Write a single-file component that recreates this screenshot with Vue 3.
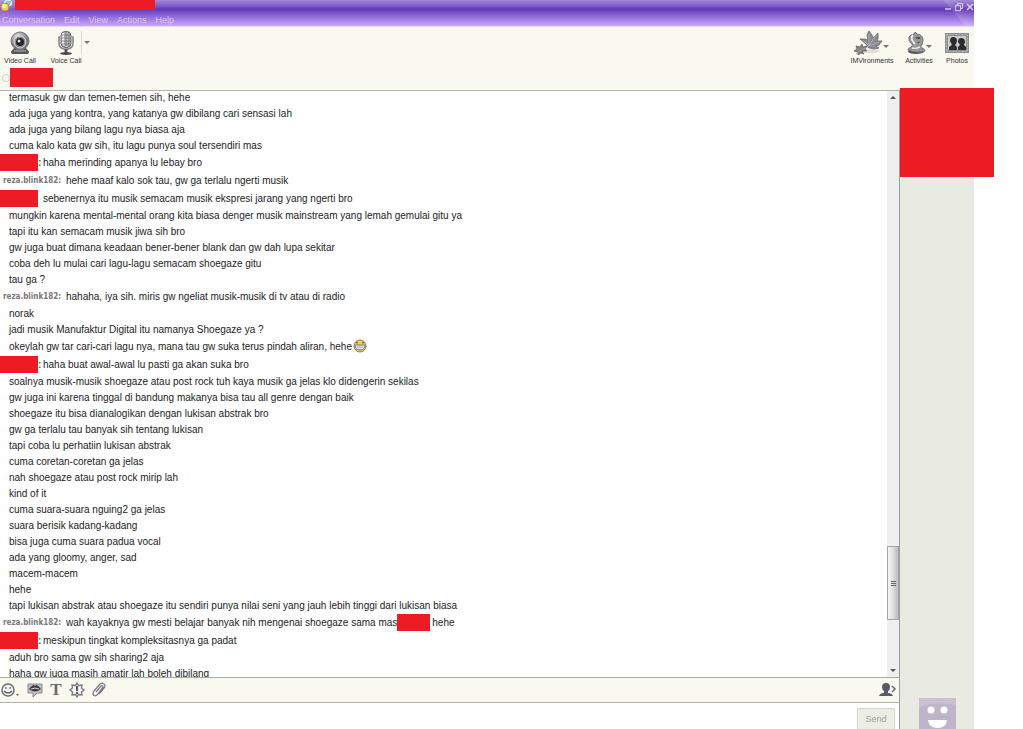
<script setup>
import { ref } from 'vue'

const draft = ref('')

const menus = ['Conversation', 'Edit', 'View', 'Actions', 'Help']

const messages = [
  {
    lines: [
      'termasuk gw dan temen-temen sih, hehe',
      'ada juga yang kontra, yang katanya gw dibilang cari sensasi lah',
      'ada juga yang bilang lagu nya biasa aja',
      'cuma kalo kata gw sih, itu lagu punya soul tersendiri mas'
    ]
  },
  { colon: true, text: 'haha merinding apanya lu lebay bro' },
  { name: 'reza.blink182:', text: 'hehe maaf kalo sok tau, gw ga terlalu ngerti musik' },
  {
    text: 'sebenernya itu musik semacam musik ekspresi jarang yang ngerti bro',
    lines: [
      'mungkin karena mental-mental orang kita biasa denger musik mainstream yang lemah gemulai gitu ya',
      'tapi itu kan semacam musik jiwa sih bro',
      'gw juga buat dimana keadaan bener-bener blank dan gw dah lupa sekitar',
      'coba deh lu mulai cari lagu-lagu semacam shoegaze gitu',
      'tau ga ?'
    ]
  },
  {
    name: 'reza.blink182:',
    text: 'hahaha, iya sih. miris gw ngeliat musik-musik di tv atau di radio',
    lines: [
      'norak',
      'jadi musik Manufaktur Digital itu namanya Shoegaze ya ?',
      'okeylah gw tar cari-cari lagu nya, mana tau gw suka terus pindah aliran, hehe'
    ],
    grin: true
  },
  {
    colon: true,
    text: 'haha buat awal-awal lu pasti ga akan suka bro',
    lines: [
      'soalnya musik-musik shoegaze atau post rock tuh kaya musik ga jelas klo didengerin sekilas',
      'gw juga ini karena tinggal di bandung makanya bisa tau all genre dengan baik',
      'shoegaze itu bisa dianalogikan dengan lukisan abstrak bro',
      'gw ga terlalu tau banyak sih tentang lukisan',
      'tapi coba lu perhatiin lukisan abstrak',
      'cuma coretan-coretan ga jelas',
      'nah shoegaze atau post rock mirip lah',
      'kind of it',
      'cuma suara-suara nguing2 ga jelas',
      'suara berisik kadang-kadang',
      'bisa juga cuma suara padua vocal',
      'ada yang gloomy, anger, sad',
      'macem-macem',
      'hehe',
      'tapi lukisan abstrak atau shoegaze itu sendiri punya nilai seni yang jauh lebih tinggi dari lukisan biasa'
    ]
  },
  {
    name: 'reza.blink182:',
    text: 'wah kayaknya gw mesti belajar banyak nih mengenai shoegaze sama mas',
    after: 'hehe'
  },
  {
    colon: true,
    text: 'meskipun tingkat kompleksitasnya ga padat',
    lines: [
      'aduh bro sama gw sih sharing2 aja',
      'haha gw juga masih amatir lah boleh dibilang'
    ]
  }
]
</script>

<template>
  <div class="window">
    <header class="title-area">
      <div class="title-bar">
        <svg class="app-icon" width="14" height="12" viewBox="0 0 14 12">
          <ellipse cx="8" cy="3" rx="5" ry="4" fill="#d8eef4" stroke="#4f93b4" />
          <path d="M6 2h5M6 4h4" stroke="#4f93b4" />
          <circle cx="5" cy="7" r="4" fill="#f6d24a" stroke="#c08a28" />
          <circle cx="4" cy="6" r="2" fill="#fff6c8" />
        </svg>
        <span class="redacted title-name"></span>
        <div class="window-controls">
          <button aria-label="Minimize"><svg width="8" height="9" viewBox="0 0 8 9"><path d="M1 7h6" stroke="#d9cdf2" stroke-width="1.500" /></svg></button>
          <button aria-label="Restore"><svg width="8" height="9" viewBox="0 0 8 9"><path d="M2.500 3V1.500h5v5H6M.5 3.500h5v5h-5z" fill="none" stroke="#d9cdf2" /></svg></button>
          <button aria-label="Close"><svg width="8" height="9" viewBox="0 0 8 9"><path d="M1 2l6 6M7 2L1 8" stroke="#d9cdf2" stroke-width="1.600" /></svg></button>
        </div>
      </div>
      <nav class="menu">
        <button v-for="item in menus" :key="item">{{ item }}</button>
      </nav>
    </header>

    <div class="toolbar">
      <button class="tool">
        <svg width="24" height="24" viewBox="0 0 24 24">
          <defs>
            <radialGradient id="lens" cx=".4" cy=".3"><stop offset="0" stop-color="#f4f4f4" /><stop offset="1" stop-color="#77777a" /></radialGradient>
          </defs>
          <path d="M6 17L3 21q0 2 3 2h12q3 0 3-2l-3-4z" fill="#55555a" />
          <circle cx="12" cy="10" r="9" fill="url(#lens)" stroke="#77777a" />
          <circle cx="12" cy="11" r="6" fill="#8d8d90" stroke="#d8d8d8" />
          <circle cx="12" cy="11" r="4" fill="#252528" />
          <circle cx="11" cy="10" r="1.500" fill="#ddd" />
          <path d="M6 20h12" stroke="#b8b8ba" />
        </svg>
        <span>Video Call</span>
      </button>
      <button class="tool">
        <svg width="24" height="24" viewBox="0 0 24 24">
          <path d="M6 6H5v6q0 5 5 6h4q5-1 5-6V6h-1" fill="none" stroke="#88888b" stroke-width="1.600" />
          <rect x="7" y="0.500" width="10" height="16" rx="4" fill="#b4b4b7" stroke="#6e6e72" />
          <path d="M9 2v12" stroke="#f4f4f4" stroke-width="2" />
          <path d="M12 1v14M15 1v14M7 4h10M7 7h10M7 10h10M7 13h10" stroke="#77777b" stroke-width=".8" />
          <path d="M12 18v4" stroke="#555" stroke-width="3" />
          <ellipse cx="12" cy="22.500" rx="6" ry="1.500" fill="#49494c" />
        </svg>
        <span>Voice Call</span>
      </button>
      <button class="arrow divided" aria-label="Voice call options"></button>
      <span class="spacer"></span>
      <button class="tool wide">
        <svg width="28" height="24" viewBox="0 0 28 24">
          <ellipse cx="17" cy="20" rx="9" ry="2" fill="#e2e2da" />
          <path d="M15 17l-3-4-6-5 5 0 3 1-1-5 2-4 3 4 1 3 5-5 0 6-1 2 5 0-3 4-3 1 3 2-5 1-4-1z" fill="#8c8c90" stroke="#66666a" stroke-width=".8" />
          <path d="M15 15L9 9M15 15L15 3M15 15l7-11M15 15l10-4" fill="none" stroke="#c4c4c7" stroke-width=".6" />
          <path d="M8 20l2 3-3-1-3 2 0-3-4-1 3-2-1-3 4 1 2-3 1 3 4-1-2 3 2 2z" fill="#85858a" stroke="#626266" stroke-width=".8" />
          <path d="M2 23l5-4 7-3" fill="none" stroke="#a9a9ac" stroke-width=".8" />
        </svg>
        <span>IMVironments</span>
        <i class="arrow over"></i>
      </button>
      <button class="tool activities">
        <svg width="24" height="24" viewBox="0 0 24 24">
          <ellipse cx="13" cy="20.500" rx="8" ry="2.500" fill="#56565a" />
          <path d="M5 19q0-2 3-3 2-1 1-3-4-3-3-7 2-3 5-3l1-2 2 2q6 1 6 6 0 4-2 6-1 1 1 2 3 1 3 3-8 3-17-1z" fill="#98989b" stroke="#66666a" stroke-width=".9" />
          <path d="M10 4q-2 2-1 5 2 3 3 4" fill="none" stroke="#ececee" stroke-width="1.800" />
          <path d="M12 7q3-2 6 0l-2 1zM12 11q3 1 5-1l-1 2z" fill="#3f3f43" />
          <path d="M9 17q4 1 8-1" fill="none" stroke="#ececee" stroke-width="1.400" />
        </svg>
        <span>Activities</span>
        <i class="arrow over"></i>
      </button>
      <button class="tool">
        <svg width="24" height="24" viewBox="0 0 24 24">
          <path d="M0 2h24v20H0z" fill="#85858a" />
          <path d="M1.500 3.500h21v17h-21z" fill="none" stroke="#bdbdc0" stroke-width="1.500" stroke-dasharray="2 1" />
          <path d="M3 5h18v14H3z" fill="#cbcbcd" />
          <path d="M5 10q0-4 3-4 4 0 4 4l-1 3-1 1 2 2v3H4v-3l3-2zM13 11q0-4 3-4 4 0 4 4l-1 3 2 2v3h-8v-3l2-2z" fill="#2c2c30" />
        </svg>
        <span>Photos</span>
      </button>
    </div>

    <div class="contact">
      <label class="status"><input type="radio" aria-label="Status" /></label>
      <span class="redacted contact-name"></span>
    </div>

    <div class="body">
      <main class="conversation">
        <div class="history">
          <div class="log">
            <div v-for="(message, i) in messages" :key="i" class="message">
              <p v-if="message.text" class="first">
                <b v-if="message.name" class="name">{{ message.name }}</b>
                <b v-else class="hidden-name"><span class="redacted"></span><template v-if="message.colon">:</template></b>
                <span>{{ message.text }}</span>
                <template v-if="message.after">
                  <span class="redacted inline-name"></span>
                  <span>{{ message.after }}</span>
                </template>
              </p>
              <p v-for="(line, j) in message.lines" :key="j" class="line">
                {{ line }}
                <svg v-if="message.grin && j === message.lines.length - 1" class="grin" width="14" height="14" viewBox="0 0 14 14">
                  <circle cx="7" cy="7" r="6" fill="#f7cf52" stroke="#a87532" />
                  <path d="M3 4q1-1 2 0M9 4q1-1 2 0" fill="none" stroke="#634019" />
                  <path d="M2 6h10q0 5-5 5T2 6z" fill="#fff" stroke="#6a79ae" />
                  <path d="M2 8h10M5 6v4M7 6v5M9 6v4" stroke="#8795c8" stroke-width=".6" />
                </svg>
              </p>
            </div>
          </div>
          <div class="scrollbar">
            <i class="up"></i>
            <div class="thumb"><i></i><i></i><i></i></div>
            <i class="down"></i>
          </div>
        </div>

        <div class="format-bar">
          <button aria-label="Emoticons">
            <svg width="20" height="16" viewBox="0 0 20 16">
              <circle cx="8" cy="8" r="6" fill="#f7f7f5" stroke="#6b6b76" stroke-width="1.500" />
              <path d="M6 5v2M10 5v2M4 9q4 4 8 0" fill="none" stroke="#60606b" stroke-width="1.300" />
              <path d="M16 12h3l-1.500 2z" fill="#60606b" />
            </svg>
          </button>
          <button aria-label="Audibles">
            <svg width="16" height="16" viewBox="0 0 16 16">
              <path d="M1 2h14v9h-5l-4 4v-4H1z" fill="#c2c1c7" stroke="#8a8992" />
              <path d="M2 7q3-4 5-4l1 1 1-1q2 0 5 4-6 5-12 0z" fill="#3b3a42" />
              <path d="M4 7q4-2 8 0" fill="none" stroke="#ddd" />
            </svg>
          </button>
          <button class="font-button" aria-label="Font">T</button>
          <button aria-label="Buzz">
            <svg width="16" height="16" viewBox="0 0 16 16">
              <path d="M8 1l1.500 2.500L13 3l-.5 3L15 8l-2.500 2 .5 3-3.500-.5L8 15l-1.500-2.500L3 13l.5-3L1 8l2.500-2L3 3l3.500.5z" fill="#f2f2ee" stroke="#777680" stroke-width="1.300" />
              <path d="M8 4v5M8 10v2" stroke="#585862" stroke-width="2" />
            </svg>
          </button>
          <button aria-label="Attach file">
            <svg width="14" height="16" viewBox="0 0 14 16"><path d="M4 10l5-6q2-1 2 1l-6 8q-3 2-4-1 0-2 1-3l6-7q3-2 5 1 0 2-1 3l-5 6" fill="none" stroke="#777680" stroke-width="1.200" /></svg>
          </button>
          <span class="spacer"></span>
          <button aria-label="Add contact">
            <svg width="17" height="14" viewBox="0 0 17 14">
              <path d="M3 4q0-4 4-4t4 4q0 3-2 4v2q4 0 5 3H0q1-3 5-3V8Q3 7 3 4z" fill="#5b5968" />
              <path d="M13 3l3 3-3 3" fill="none" stroke="#686673" stroke-width="1.500" />
            </svg>
          </button>
        </div>

        <div class="compose">
          <textarea v-model="draft" aria-label="Message"></textarea>
          <button class="send">Send</button>
        </div>
      </main>

      <aside class="side">
        <div class="redacted display-picture"></div>
        <svg class="avatar" width="37" height="37" viewBox="0 0 37 37">
          <path d="M0 0h37v37H0z" fill="#c9c0d2" />
          <path d="M0 10Q14 3 37 7v30H0z" fill="#bfb5cb" />
          <circle cx="12" cy="12" r="3.500" fill="#fff" />
          <circle cx="25" cy="12" r="3.500" fill="#fff" />
          <path d="M9 22h19q-1 8-9.500 8T9 22z" fill="#fff" />
        </svg>
      </aside>
    </div>
  </div>
</template>

<style>
body {
  margin: 0;
  background: #fff;
}
</style>

<style scoped>
.window {
  display: flex;
  flex-direction: column;
  height: 100vh;
  margin-right: 49px;
  background: #f9f9f0;
  color: #1c1c24;
  font-family: "Liberation Sans", Arial, sans-serif;
  font-size: 10px;
}

button {
  padding: 0;
  border: 0;
  background: none;
  color: inherit;
  font-family: inherit;
}

svg {
  display: block;
}

.redacted {
  background: #ed1c24;
}

.spacer {
  flex: 1;
}

.title-area {
  flex: none;
  height: 27px;
  border-bottom: 1px solid #e8dcfa;
  box-sizing: border-box;
  background:
    linear-gradient(50deg, transparent 50%, #ffffff22 52%, transparent 85%) right / 40px 100% no-repeat,
    linear-gradient(130deg, #d9a8ff66, transparent 60%) left / 90px 100% no-repeat,
    linear-gradient(#a38ad6, #7753c2 7px, #6038b8 9px, #cda8fa);
}

.title-bar {
  display: flex;
  height: 12px;
}

.title-name {
  width: 140px;
  height: 10px;
  margin-left: 1px;
}

.window-controls {
  display: flex;
  gap: 3px;
  margin-left: auto;
}

.menu {
  display: flex;
  gap: 9px;
  padding-left: 2px;
}

.menu button {
  color: #d9c9f5;
  font-size: 9px;
  line-height: 16px;
}

.toolbar {
  display: flex;
  flex: none;
  height: 41px;
  padding: 4px 2px 0 5px;
  box-sizing: border-box;
}

.tool {
  position: relative;
  display: flex;
  flex-direction: column;
  align-items: center;
  width: 30px;
  color: #333;
  font-size: 7px;
  line-height: 12px;
  white-space: nowrap;
}

.tool + .tool {
  margin-left: 16px;
}

.tool.wide {
  width: 42px;
}

.tool.wide svg {
  margin-right: 8px;
}

.tool.activities {
  margin-left: 11px;
}

.tool.activities svg {
  margin-right: 8px;
}

.tool.activities + .tool {
  margin-left: 8px;
}

.arrow {
  align-self: flex-start;
  padding: 10px 2px;
}

.arrow::before {
  content: "";
  display: block;
  border: 3px solid transparent;
  border-top-color: #777;
  border-bottom: 0;
}

.divided {
  height: 23px;
  border-left: 1px solid #ddddd2;
}

.arrow.over {
  position: absolute;
  top: 4px;
  right: 2px;
}

.activities .over {
  right: 0;
}

.contact {
  display: flex;
  flex: none;
  height: 22px;
}

.status {
  padding-top: 6px;
}

.status input {
  appearance: none;
  display: block;
  width: 8px;
  height: 8px;
  margin: 0 0 0 2px;
  border: 1px solid #cfcfc8;
  border-radius: 50%;
}

.contact-name {
  width: 43px;
  height: 19px;
}

.body {
  display: flex;
  flex: 1;
  min-height: 0;
}

.conversation {
  display: flex;
  flex: 1;
  flex-direction: column;
  min-width: 0;
  border-right: 1px solid #9c9c9c;
  background: #fff;
}

.history {
  display: flex;
  flex: 1;
  min-height: 0;
  border-top: 1px solid #b2b2ae;
  overflow: hidden;
}

.log {
  flex: 1;
  min-width: 0;
  margin-top: -2px;
}

p {
  margin: 0;
  white-space: nowrap;
}

.first {
  display: flex;
  align-items: center;
  height: 18px;
}

.name {
  width: 63px;
  padding-left: 3px;
  color: #77777a;
  font-family: "DejaVu Sans Condensed", Verdana, sans-serif;
  font-size: 8px;
}

.hidden-name {
  display: flex;
  align-items: center;
  width: 43px;
  color: #55556a;
}

.hidden-name .redacted {
  width: 38px;
  height: 17px;
}

.inline-name {
  width: 33px;
  height: 17px;
  margin: 0 2px 0 0;
}

.line {
  display: flex;
  align-items: center;
  gap: 1px;
  min-height: 16px;
  padding-left: 9px;
}

.grin {
  margin: 2px 0;
}

.scrollbar {
  display: flex;
  flex-direction: column;
  align-items: center;
  width: 12px;
  padding: 5px 0;
  background: #efefef;
}

.up {
  margin-bottom: auto;
  border: 3px solid transparent;
  border-top: 0;
  border-bottom-color: #555;
}

.down {
  margin-top: 49px;
  border: 3px solid transparent;
  border-bottom: 0;
  border-top-color: #555;
}

.thumb {
  display: flex;
  flex-direction: column;
  align-items: center;
  justify-content: center;
  gap: 1px;
  width: 10px;
  height: 72px;
  border: 1px solid #a5a5a8;
  background: linear-gradient(90deg, #f5f5f5, #dedee0 50%, #bcbcc0);
}

.thumb i {
  width: 5px;
  height: 1px;
  background: #66666a;
}

.format-bar {
  display: flex;
  align-items: center;
  flex: none;
  gap: 7px;
  height: 26px;
  padding: 0 3px 0 0;
  box-sizing: border-box;
  border-top: 1px solid #aaa;
  border-bottom: 1px solid #b5b5b0;
  background: #f9f9f0;
}

.font-button {
  width: 12px;
  color: #686872;
  font-family: "Liberation Serif", serif;
  font-size: 17px;
  font-weight: bold;
  line-height: 16px;
}

.compose {
  display: flex;
  flex: none;
  height: 26px;
}

.compose textarea {
  flex: 1;
  padding: 4px;
  border: 0;
  outline: 0;
  resize: none;
  font: inherit;
}

.send {
  width: 38px;
  height: 22px;
  margin: 5px 4px 0 0;
  border: 1px solid #d5d6cc;
  border-radius: 2px;
  background: #ecede3;
  color: #a1a19c;
  font-size: 9px;
}

.side {
  display: flex;
  flex: none;
  flex-direction: column;
  width: 74px;
  background: #e9ebe3;
}

.display-picture {
  width: 94px;
  height: 89px;
  margin-top: -2px;
}

.avatar {
  flex: none;
  align-self: center;
  margin: auto 0 -6px;
}
</style>
